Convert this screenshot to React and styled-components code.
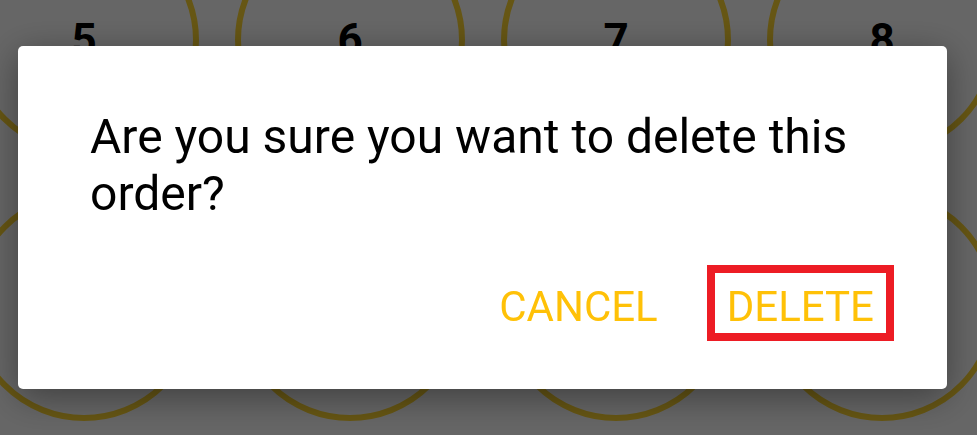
import React from 'react'
import styled, { createGlobalStyle } from 'styled-components'

// second row sits fully behind the dialog, so only its rings show
const tables = [
    { id: 5, label: '5' },
    { id: 6, label: '6' },
    { id: 7, label: '7' },
    { id: 8, label: '8' },
    { id: 9, label: '' },
    { id: 10, label: '' },
    { id: 11, label: '' },
    { id: 12, label: '' },
]

const App = () => {
    return (
        <>
            <GlobalStyle />
            <Page>
                <TableGrid>
                    {tables.map((t) => (
                        <TableCircle key={t.id}>{t.label}</TableCircle>
                    ))}
                </TableGrid>
            </Page>
            <Scrim>
                <Dialog>
                    <Message>Are you sure you want to delete this order?</Message>
                    <Actions>
                        <TextButton>CANCEL</TextButton>
                        <TextButton highlighted>DELETE</TextButton>
                    </Actions>
                </Dialog>
            </Scrim>
        </>
    )
}

export default App

const GlobalStyle = createGlobalStyle`
html, body {
    margin:0;
    padding:0;
    height:435px;
    overflow:hidden;
    background:#ffffff;
    font-family:Roboto, "Noto Sans", sans-serif;
}
`
const Page = styled.div`
height:435px;
overflow:hidden;
background:#ffffff;
`
const TableGrid = styled.div`
display:grid;
grid-template-columns:repeat(4, 230px);
gap:36px;
margin:-75px 0 0 -31px;
`
const TableCircle = styled.div`
box-sizing:border-box;
width:230px;
height:230px;
border-radius:50%;
border:6px solid rgb(255, 214, 50);
display:flex;
align-items:center;
justify-content:center;
font-size:44px;
font-weight:700;
color:#000;
`
const Scrim = styled.div`
position:fixed;
inset:0;
background:rgba(0, 0, 0, 0.6);
display:flex;
align-items:flex-start;
padding:46px 30px 0 18px;
`
const Dialog = styled.div`
flex:1;
background:#ffffff;
border-radius:5px;
box-shadow:0 8px 36px rgba(0, 0, 0, 0.4);
padding:62px 61px 56px 72px;
display:flex;
flex-direction:column;
`
const Message = styled.div`
font-size:48px;
line-height:57px;
color:#000;
margin-right:11px;
`
const Actions = styled.div`
display:flex;
justify-content:flex-end;
gap:45px;
margin-top:51px;
`
const TextButton = styled.div`
box-sizing:border-box;
height:60px;
padding:8px 12px 0;
font-size:42px;
line-height:52px;
color:#ffc107;
outline:${(p) => (p.highlighted ? '8px solid #ed1c24' : 'none')};
cursor:pointer;
`
